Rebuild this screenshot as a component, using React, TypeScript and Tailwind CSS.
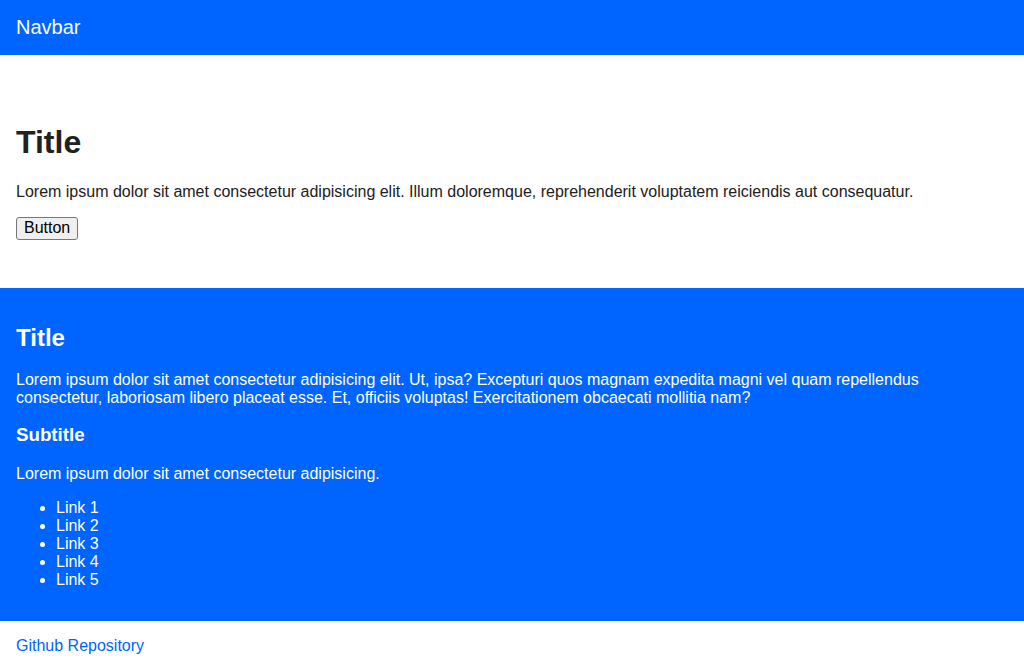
import React from "react";

const links = ["Link 1", "Link 2", "Link 3", "Link 4", "Link 5"];

export default function App() {
  return (
    <div className="min-h-screen bg-white font-['Liberation_Sans',Arial,sans-serif] text-[16px] leading-[1.125] text-[#212121]">
      {/* Navbar */}
      <nav className="flex h-[55px] items-center bg-[#0064ff] px-4 pb-px text-[20px] text-white">Navbar</nav>

      {/* Hero */}
      <section className="px-4 py-12">
        <h1 className="my-[21.44px] text-[32px] leading-[1.15] font-bold">Title</h1>
        <p className="my-4">
          Lorem ipsum dolor sit amet consectetur adipisicing elit. Illum doloremque, reprehenderit voluptatem reiciendis aut consequatur.
        </p>
        <button className="h-[23px] rounded-[3px] border border-[#767676] bg-[#efefef] px-[7px] text-[16px] leading-[1.125] text-black">
          Button
        </button>
      </section>

      {/* Content */}
      <section className="bg-[#0064ff] px-4 py-4 text-white">
        <h2 className="my-[19.92px] text-[24px] leading-[1.15] font-bold">Title</h2>
        <p className="my-4">
          Lorem ipsum dolor sit amet consectetur adipisicing elit. Ut, ipsa? Excepturi quos magnam expedita magni vel quam repellendus consectetur, laboriosam libero placeat esse. Et, officiis voluptas! Exercitationem obcaecati mollitia nam?
        </p>
        <h3 className="mt-[17px] mb-[19.72px] text-[18.72px] leading-[1.15] font-bold">Subtitle</h3>
        <p className="my-4">Lorem ipsum dolor sit amet consectetur adipisicing.</p>
        <ul className="my-4 list-disc pl-10">
          {links.map((l) => (
            <li key={l}>{l}</li>
          ))}
        </ul>
      </section>

      {/* Footer */}
      <footer className="px-4 pt-4 pb-3">
        <a href="#" className="text-[#0064ff]">Github Repository</a>
      </footer>
    </div>
  );
}
